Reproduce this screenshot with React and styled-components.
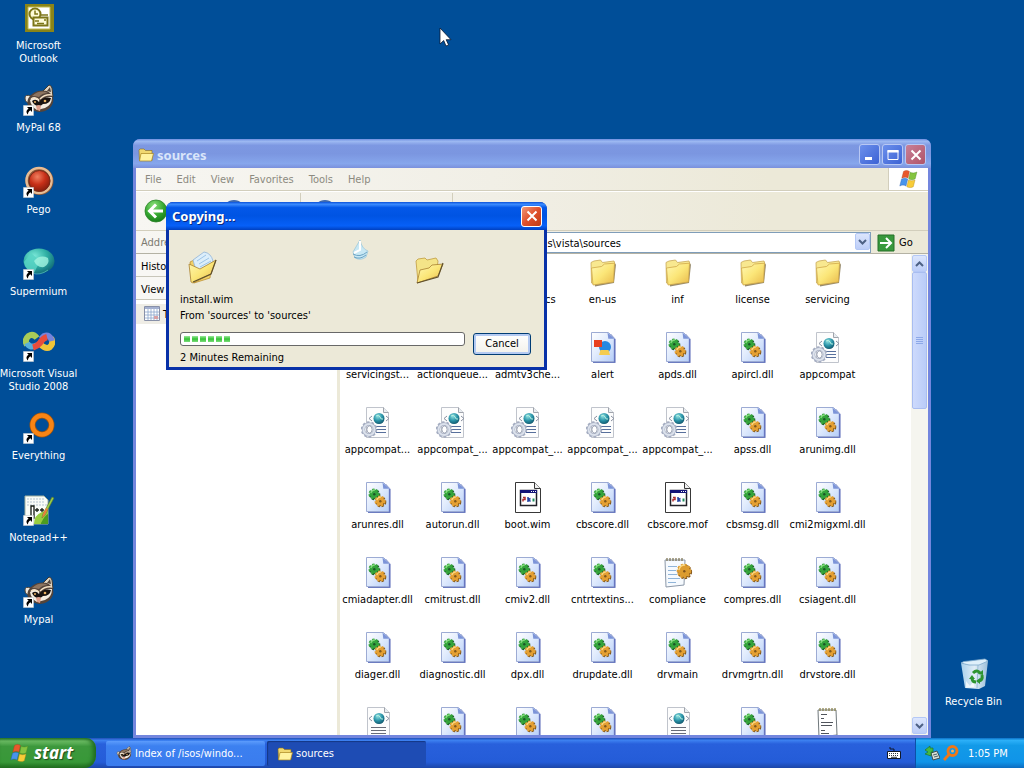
import React from 'react';
import styled, { createGlobalStyle, css } from 'styled-components';

const UI = "'DejaVu Sans Condensed', 'Liberation Sans', sans-serif";
const CAPTION = "'Noto Sans', 'Open Sans', sans-serif";

const GlobalStyle = createGlobalStyle`
  * { box-sizing: border-box; }
  body { margin: 0; background: #004e98; font: 11px/13px ${UI}; color: #000; }
  button, input { font: inherit; color: inherit; margin: 0; border: 0; padding: 0; background: none; }
  ul { list-style: none; margin: 0; padding: 0; }
  svg { display: block; flex: none; }
`;

/* ---------- drawings ---------- */

const HiddenSvg = styled.svg`
  position: absolute;
  width: 0;
  height: 0;
`;

const Defs = () => (
  <HiddenSvg aria-hidden="true">
    <defs>
      <linearGradient id="folderFront" x1="0" y1="0" x2="1" y2="1">
        <stop offset="0" stopColor="#fff8b4" /><stop offset="0.5" stopColor="#fbe678" /><stop offset="1" stopColor="#e8b84a" />
      </linearGradient>
      <linearGradient id="page" x1="0" y1="0" x2="1" y2="1">
        <stop offset="0" stopColor="#ffffff" /><stop offset="0.45" stopColor="#e2ecfd" /><stop offset="1" stopColor="#b4cdf8" />
      </linearGradient>
      <radialGradient id="globe" cx="0.4" cy="0.3" r="0.8">
        <stop offset="0" stopColor="#8fe0e0" /><stop offset="0.5" stopColor="#2a94a8" /><stop offset="1" stopColor="#0c4a60" />
      </radialGradient>
      <radialGradient id="pego" cx="0.4" cy="0.3" r="0.75">
        <stop offset="0" stopColor="#f08060" /><stop offset="0.5" stopColor="#c83018" /><stop offset="1" stopColor="#7e1c0c" />
      </radialGradient>
      <radialGradient id="teal" cx="0.35" cy="0.3" r="0.8">
        <stop offset="0" stopColor="#7ae8d8" /><stop offset="0.5" stopColor="#30b0a4" /><stop offset="1" stopColor="#0c6070" />
      </radialGradient>
      <radialGradient id="backBall" cx="0.4" cy="0.25" r="0.8">
        <stop offset="0" stopColor="#8ce07c" /><stop offset="0.55" stopColor="#36a832" /><stop offset="1" stopColor="#157a18" />
      </radialGradient>
      <linearGradient id="bin" x1="0" y1="0" x2="1" y2="0">
        <stop offset="0" stopColor="#b8dcf4" /><stop offset="0.5" stopColor="#f4fbff" /><stop offset="1" stopColor="#a8c8e0" />
      </linearGradient>
    </defs>
  </HiddenSvg>
);

const Flag = ({ size = 20 }) => (
  <svg width={size} height={size} viewBox="0 0 20 20">
    <path d="M4.500 2.500c2-1.400 4-1.300 5.900-.1L9 9C7 7.900 5.200 8 2.800 9.200z" fill="#e8582c" stroke="#b03c18" strokeWidth=".4" />
    <path d="M11.200 3.200c2 1.100 4.200 1 6.700-.2L16.200 9.800c-2 1.200-4.300 1.200-6.500.1z" fill="#84c440" stroke="#4c8824" strokeWidth=".4" />
    <path d="M2.500 10.200c2.300-1.200 4.200-1.200 6.200-.1L7 17c-2-1.200-4-1.200-6.200 0z" fill="#4894ec" stroke="#2058b0" strokeWidth=".4" />
    <path d="M9.500 10.900c2.200 1.100 4.300 1.100 6.500 0L14.300 17.700c-2.200 1.200-4.300 1.200-6.500.1z" fill="#f8cc38" stroke="#b08818" strokeWidth=".4" />
  </svg>
);

const FolderIcon = ({ size = 32 }) => (
  <svg width={size} height={size} viewBox="0 0 32 32">
    <path d="M6 8l20-1.500 3 2L27 27 8 30.500z" fill="#74643c" opacity=".75" />
    <path d="M4 6.500l3-1.500 6.500-1 2 2.500L27 5l1 3L8 28 4.500 27z" fill="#f8e890" stroke="#c8a858" strokeWidth=".8" />
    <path d="M4.500 12l10-1.500 3-2.500 10-.8L26.500 26 6 29z" fill="url(#folderFront)" stroke="#d0a848" strokeWidth=".8" />
  </svg>
);

const MiniFolder = () => (
  <svg width="16" height="16" viewBox="0 0 16 16">
    <path d="M1 3l1-1h4l1.500 1.500H14v10H1.500z" fill="#f0d870" stroke="#8a6c18" strokeWidth=".6" />
    <path d="M3 6.500h12.500L13.500 14H1.500z" fill="#fff3a0" stroke="#a88420" strokeWidth=".7" />
  </svg>
);

const Gear = ({ cx, cy, r, color, dark, light }) => (
  <g>
    <circle cx={cx + 0.8} cy={cy + 0.9} r={r} fill={dark} stroke={dark} strokeWidth="2.600" strokeDasharray="2.200 1.300" />
    <circle cx={cx} cy={cy} r={r} fill={color} stroke={color} strokeWidth="2.600" strokeDasharray="2.200 1.300" />
    <path d={`M${cx - r + 1} ${cy - 1}q1-${r - 1} ${r}-${r - 1}`} fill="none" stroke={light} strokeWidth="1.300" />
    <circle cx={cx + 0.3} cy={cy + 0.3} r="1.200" fill={dark} />
  </g>
);

const BluePage = () => (
  <g>
    <path d="M6 3h18l4.500 5v24H6z" fill="#6c7cc0" />
    <path d="M4.500 1.500h17l6 6v23h-23z" fill="url(#page)" stroke="#9cabd4" />
    <path d="M20.500 1.500l.8 6.200h6.200z" fill="#7c94d8" />
    <path d="M27.500 8v23" stroke="#6676c0" strokeWidth="1.300" />
  </g>
);

const DllIcon = () => (
  <svg width="32" height="32" viewBox="0 0 32 32">
    <BluePage />
    <Gear cx={12} cy={13} r={4.200} color="#34a43c" dark="#1c5428" light="#84dc7c" />
    <Gear cx={18} cy={20} r={4.200} color="#e4a034" dark="#80581c" light="#fcd880" />
  </svg>
);

const AlertIcon = () => (
  <svg width="32" height="32" viewBox="0 0 32 32">
    <BluePage />
    <circle cx="18" cy="16" r="6" fill="#2888e0" />
    <path d="M7 9h8v7H7z" fill="#e84020" />
    <path d="M12 24l1.500-5h8l1.500 5z" fill="#f4cc50" />
  </svg>
);

const WhitePage = () => (
  <path d="M5.500 1.500h17l5 5v25h-22z" fill="#fdfdfd" stroke="#c0c4cc" />
);

const XmlPart = ({ x = 17 }) => (
  <g>
    <circle cx={x} cy="12.500" r="5.500" fill="url(#globe)" />
    <path d={`M${x - 3} 10q3-2 4 1t3 2`} stroke="#b8f0e0" fill="none" />
    <path d={`M${x - 7} 10l-3 2.500 3 2.500M${x + 7} 10l3 2.500-3 2.500`} stroke="#8890a0" fill="none" />
  </g>
);

const ConfigIcon = () => (
  <svg width="34" height="32" viewBox="0 0 34 32">
    <WhitePage />
    <path d="M22.500 1.500v5h5" fill="#e8ecf0" stroke="#a0a4ac" />
    <XmlPart x={18} />
    <path d="M15 20.500h10M15 23.500h10M15 26.500h10" stroke="#58709c" />
    <circle cx="8" cy="23.500" r="7" fill="none" stroke="#a4acc0" strokeWidth="2.500" strokeDasharray="2.400 2" />
    <circle cx="8" cy="23.500" r="5.500" fill="none" stroke="#a8b0c4" strokeWidth="3.500" />
    <circle cx="8" cy="23.500" r="5.500" fill="none" stroke="#dce2ec" strokeWidth="2" />
    <ellipse cx="8.500" cy="23.500" rx="2.600" ry="3.600" fill="#fff" stroke="#8890a4" strokeWidth=".8" />
  </svg>
);

const XmlIcon = () => (
  <svg width="32" height="32" viewBox="0 0 32 32">
    <WhitePage />
    <path d="M22.500 1.500v5h5" fill="#e8ecf0" stroke="#a0a4ac" />
    <XmlPart x={17} />
    <path d="M9 21.500h15M9 24.500h15M9 27.500h15" stroke="#686c78" />
  </svg>
);

const WimIcon = () => (
  <svg width="32" height="32" viewBox="0 0 32 32">
    <path d="M3.500 1.500h19l6 6v24h-25z" fill="#fff" stroke="#383838" />
    <path d="M22.500 1.500v6h6" fill="#f0f0f0" stroke="#383838" />
    <path d="M8.500 9.500h16v15h-16z" fill="#fff" stroke="#202028" strokeWidth="1.500" />
    <path d="M8 9h17v3H8z" fill="#141478" />
    <path d="M19 10.500h1M21 10.500h1M23 10.500h1" stroke="#fff" />
    <path d="M11 16.500h2v2h-2v2" stroke="#b03030" fill="none" strokeWidth="1.500" />
    <path d="M16 16v5M18.500 17.500l-2 1 2 2" stroke="#2040a0" fill="none" strokeWidth="1.500" />
    <path d="M20.500 17.500h2v3h-2z" fill="#209060" />
  </svg>
);

const ComplianceIcon = () => (
  <svg width="32" height="32" viewBox="0 0 32 32">
    <path d="M3 4h20l-1 25-18 2z" fill="#f6fafe" stroke="#8c98a8" />
    <path d="M5 2v3M8 2v3M11 2v3M14 2v3M17 2v3M20 2v3" stroke="#807858" strokeWidth="1.300" />
    <path d="M6 10.500h9M6 14.500h8M6 18.500h9M6 22.500h12M6 26.500h8" stroke="#90b4d8" />
    <Gear cx={22} cy={15} r={6} color="#dc9c30" dark="#80541c" light="#fcd880" />
  </svg>
);

const TextIcon = () => (
  <svg width="32" height="32" viewBox="0 0 32 32">
    <path d="M6 4h18l1 25-18 2z" fill="#fff" stroke="#70787c" />
    <path d="M8 2v3M11 2v3M14 2v3M17 2v3M20 2v3M23 2v3" stroke="#8c8450" strokeWidth="1.300" />
    <path d="M9 8.500h6M9 12.500h3M9 16.500h12M9 19.500h11M9 24.500h4M9 27.500h8" stroke="#50545c" />
  </svg>
);

const Shortcut = () => (
  <g>
    <path d="M.5 21.500h10v10H.5z" fill="#fff" stroke="#c8ccd0" strokeWidth=".6" />
    <path d="M4 23h5v5l-1.700-1.700C5.500 27.500 5 28.700 5 30.500 2.500 28 3.500 26 5.600 24.700z" fill="#000" />
  </g>
);

const OutlookIcon = () => (
  <svg width="32" height="32" viewBox="0 0 32 32">
    <path d="M2 2h29v28H2z" fill="#8a8418" />
    <path d="M5 5h22v22H5z" fill="#fff" stroke="#c0ba50" />
    <circle cx="12" cy="12" r="5.500" fill="#fdfbd8" stroke="#7c7618" strokeWidth="2" />
    <path d="M12 8.500V12h3" stroke="#7c7618" fill="none" strokeWidth="1.500" />
    <path d="M10.500 15.500h14v8h-14z" fill="#fdfbd8" stroke="#7c7618" strokeWidth="2" />
    <path d="M17 13h8M12 19h4M14 21.500h7M21 18h2" stroke="#7c7618" strokeWidth="1.500" />
  </svg>
);

const RaccoonArt = () => (
  <g>
    <path d="M20 7q3-3 6-6 2 0 3 3l1 9z" fill="#e0d4c0" stroke="#403830" />
    <path d="M24 7l3-4 1 5z" fill="#54443a" />
    <path d="M8 12q-6-2-6 2 0 5 5 5z" fill="#f0e8dc" stroke="#504438" />
    <path d="M5 15C8 8 17 5 24 7c6 3 8 9 5 14-4 7-12 8-17 6-6-2-9-6-7-12z" fill="#54443a" />
    <path d="M9 12Q17 5 25 9q-6 0-9 4-3-1-7-1z" fill="#8c7460" />
    <path d="M7 16q5-5 9 0l1 4q3-8 12-7 0 8-7 11l-8 2q-6-3-7-10z" fill="#f4ece0" />
    <path d="M9 17q4-3 7 1 4-6 12-4-1 6-8 6-2 2-4 2-5 0-7-5z" fill="#181210" />
    <path d="M8 15q4-3 8 1M17 15q5-5 12-4" stroke="#f4e0c4" fill="none" strokeWidth="1.500" />
    <circle cx="12" cy="18" r="1" fill="#e8b060" /><circle cx="22" cy="17" r="1.300" fill="#e8b060" />
    <path d="M13 22q3-2 5 0l-1 5-3-1z" fill="#e0a08c" />
  </g>
);
const RaccoonIcon = () => (
  <svg width="32" height="32" viewBox="0 0 32 32"><RaccoonArt /><Shortcut /></svg>
);

const PegoIcon = () => (
  <svg width="32" height="32" viewBox="0 0 32 32">
    <circle cx="16.500" cy="15" r="14" fill="#8c5838" />
    <circle cx="16" cy="14.500" r="12.500" fill="none" stroke="#e8bc94" strokeWidth="2.500" />
    <circle cx="16.500" cy="15" r="10.500" fill="url(#pego)" stroke="#782818" />
    <Shortcut />
  </svg>
);

const SupermiumIcon = () => (
  <svg width="32" height="32" viewBox="0 0 32 32">
    <ellipse cx="16" cy="13" rx="15.500" ry="12.500" fill="url(#teal)" />
    <path d="M1 14L8 5l9 8-6 12Q2 22 1 14z" fill="#58d4c4" opacity=".85" />
    <path d="M11 13q6-7 14-3 2 6-4 9-7 1-10-6z" fill="#a4f4e0" opacity=".8" />
    <path d="M9 25q8 3 16-3" stroke="#58c8c0" fill="none" opacity=".7" />
    <Shortcut />
  </svg>
);

const VisualStudioIcon = () => (
  <svg width="32" height="32" viewBox="0 0 32 32" fill="none" strokeWidth="6">
    <path d="M14 8Q10 3 5.500 6 1 10 4 15" stroke="#a8cc58" />
    <path d="M4 13q3 6 10 2" stroke="#58b0dc" />
    <path d="M17 14q6 6 10 3 4-4 1-9" stroke="#f0c438" />
    <path d="M29 11q-2-7-8-5l-3 3" stroke="#7484dc" />
    <path d="M10 17.500q4-1 7-4.500 3-5 7-6" stroke="#e84c3c" />
    <Shortcut />
  </svg>
);

const EverythingIcon = () => (
  <svg width="32" height="32" viewBox="0 0 32 32">
    <circle cx="19" cy="13" r="9.500" fill="none" stroke="#9c5410" strokeWidth="6" />
    <circle cx="19" cy="13" r="9.500" fill="none" stroke="#f88414" strokeWidth="4.500" />
    <Shortcut />
  </svg>
);

const NotepadIcon = () => (
  <svg width="32" height="32" viewBox="0 0 32 32">
    <path d="M2 2h19l4 4v24H2z" fill="#f8fcf8" stroke="#a0b0a0" />
    <path d="M4 5h17M4 8h17M4 11h20" stroke="#b4c4d0" strokeDasharray="2 1" />
    <path d="M11 30q0-9 8-12l6-3v15z" fill="#98cc40" />
    <path d="M18 29q4-8 7-9v10h-7z" fill="#4c9c20" />
    <path d="M8 12v12h3V12z" fill="#fff" stroke="#101810" strokeWidth="1.300" />
    <path d="M12 16h4M14 14v4M17 16h4M19 14v4" stroke="#182018" strokeWidth="1.300" />
    <path d="M20 20L29 3l2 1-9 17-3 3z" fill="#98d048" stroke="#58702c" strokeWidth=".6" />
    <path d="M20 20l3-6 2 1-3 6-3 3z" fill="#e8803c" />
    <Shortcut />
  </svg>
);

const RecycleIcon = () => (
  <svg width="32" height="32" viewBox="0 0 32 32">
    <path d="M3 5q10 3 16 0l8-4 3 2-3 25-6 3-14-1z" fill="url(#bin)" opacity=".92" />
    <path d="M3 5q2-2 8-2l16-2 3 2-9 4Q10 8 3 5z" fill="#dff0fb" stroke="#7ca8cc" strokeWidth=".8" />
    <path d="M20 7l-1 23" stroke="#8cb4d0" strokeWidth=".8" />
    <path d="M8 23l4 5 4-5v6l-8 1z" fill="#fff" opacity=".7" />
    <g fill="none" stroke="#2c9430" strokeWidth="3">
      <path d="M15 15q4-4 7 0" /><path d="M24 17q1 5-3 6" /><path d="M18 24q-4 0-4-4" />
    </g>
    <path d="M20 16l5 1V12zM22 20v6l-4-3zM11 21l3-4 3 4z" fill="#2c9430" />
  </svg>
);

const CalendarIcon = () => (
  <svg width="16" height="16" viewBox="0 0 16 16">
    <path d="M.5 .5h15v14H.5z" fill="#fff" stroke="#8890a8" />
    <path d="M1 1h14v2H1z" fill="#a4b0d0" />
    <path d="M1 6h14M1 9h14M1 12h14M4 3v11M7 3v11M10 3v11M13 3v11" stroke="#8ca4cc" strokeWidth=".8" />
    <path d="M10 10h4v3h-4z" fill="#d8a0a4" />
  </svg>
);

const BackIcon = () => (
  <svg width="24" height="24" viewBox="0 0 24 24">
    <circle cx="12" cy="12" r="11" fill="url(#backBall)" stroke="#2c8428" strokeWidth=".8" />
    <path d="M12 5.500L5.500 12l6.500 6.500M6 12h13" fill="none" stroke="#fff" strokeWidth="3" />
  </svg>
);

const RoundToolIcon = () => (
  <svg width="24" height="24" viewBox="0 0 24 24">
    <circle cx="12" cy="12" r="10" fill="#c4dcf4" stroke="#3c68b0" strokeWidth="2" />
  </svg>
);

const Pointer = styled.svg`
  position: absolute;
  left: 439px;
  top: 27px;
  z-index: 3;
`;

const CopyScene = () => (
  <svg width="100%" height="56" viewBox="0 0 351 56" preserveAspectRatio="xMinYMin meet" aria-hidden="true">
    <g transform="translate(7 14)">
      <path d="M3 12l6-3 16 3-2 16-16 5z" fill="#f0d068" stroke="#b88828" strokeWidth=".7" />
      <path d="M6 10L17 2q7 1 9 9l-4 14-12-1z" fill="#dceefa" stroke="#90b4d8" strokeWidth=".8" />
      <path d="M10 11l9-6M12 14l10-6M13 17l11-6" stroke="#9cc4e8" />
      <path d="M2 14l11 5 16-9-5 14-18 9-2-1z" fill="url(#folderFront)" stroke="#a88030" strokeWidth=".8" />
      <path d="M29 10l-5 14-18 8" fill="none" stroke="#60502c" strokeWidth="1.200" />
    </g>
    <g>
      <path d="M180 4l-7 12 2 6q6 3 11-1l2-6q-6-2-8-11z" fill="#c8e8f4" stroke="#98c4d8" strokeWidth=".7" />
      <path d="M180 5v9l-6 3" stroke="#fff" fill="none" strokeWidth="2" />
      <path d="M173 18q7 4 14-2M174 21q6 3 12-2" stroke="#6ca4c4" fill="none" />
    </g>
    <g transform="translate(234 18)">
      <path d="M2 7l2-2 7-1 2 2 9-2 2 3-2 16-18 5z" fill="#f4e488" stroke="#c09c40" strokeWidth=".8" />
      <path d="M3 29l3-13 9-2 3-3 11-1-5 12z" fill="url(#folderFront)" stroke="#a88030" strokeWidth=".8" />
      <path d="M29 9l-5 14-21 6" fill="none" stroke="#60502c" strokeWidth="1.200" />
    </g>
  </svg>
);

const CloseGlyph = () => (
  <svg width="12" height="12" viewBox="0 0 12 12"><path d="M1.500 1.500l9 9M10.500 1.500l-9 9" stroke="#fff" strokeWidth="2" /></svg>
);
const MinGlyph = () => (
  <svg width="12" height="12" viewBox="0 0 12 12"><path d="M1 8h7v3H1z" fill="#fff" /></svg>
);
const MaxGlyph = () => (
  <svg width="12" height="12" viewBox="0 0 12 12"><path d="M1 1.500h10v9H1z" fill="none" stroke="#fff" /><path d="M.5 1h11v2.500H.5z" fill="#fff" /></svg>
);
const Chevron = ({ up }) => (
  <svg width="9" height="6" viewBox="0 0 9 6">
    <path d={up ? 'M1 5l3.500-3.500L8 5' : 'M1 1l3.500 3.500L8 1'} fill="none" stroke="#4d6185" strokeWidth="2" />
  </svg>
);

/* ---------- desktop ---------- */

const Screen = styled.div`
  display: flex;
  flex-direction: column;
  height: 100vh;
  overflow: hidden;
`;

const Desktop = styled.main`
  position: relative;
  flex: 1;
  min-height: 0;
  display: flex;
  justify-content: space-between;
  padding-top: 2px;
`;

const IconColumn = styled.div`
  display: flex;
  flex-direction: column;
  padding-bottom: ${p => (p.$end ? '29px' : '0')};
  padding-right: ${p => (p.$end ? '12px' : '0')};
  justify-content: ${p => (p.$end ? 'flex-end' : 'flex-start')};
`;

const DesktopIcon = styled.button`
  display: flex;
  flex-direction: column;
  align-items: center;
  gap: 5px;
  width: 77px;
  height: ${p => (p.$last ? '51px' : '82px')};
  color: #fff;
  white-space: pre;
  text-align: center;
`;

/* ---------- windows ---------- */

const Explorer = styled.section`
  position: absolute;
  left: 133px;
  right: 93px;
  top: 139px;
  bottom: 0;
  display: flex;
  flex-direction: column;
  padding: 0 3px 3px;
  border-radius: 7px 7px 0 0;
  background: #7386de;
  overflow: hidden;
`;

const TitleBar = styled.header`
  display: flex;
  align-items: center;
  flex: none;
  margin: 0 -3px;
  ${p => p.$active ? css`
    height: 28px;
    padding: 0 5px 0 6px;
    background: linear-gradient(#0a50d8, #3c8cff 8%, #0458e8 20%, #0054e3 50%, #0660f8 85%, #0040c0);
    color: #fff;
    text-shadow: 1px 1px #0a2a80;
  ` : css`
    gap: 3px;
    height: 29px;
    padding: 2px 5px 0 5px;
    background: linear-gradient(#6f8fe0, #9db9f2 8%, #7d98e2 22%, #7b96e0 50%, #86a6ec 85%, #7a90dc);
    color: #d9e5fa;
  `}
`;

const Caption = styled.h1`
  flex: 1;
  margin: 0;
  font: bold 13px/18px ${CAPTION};
`;

const CaptionButton = styled.button`
  display: grid;
  place-items: center;
  width: 21px;
  height: 21px;
  border: 1px solid ${p => (p.$dim ? '#b8c8f4' : '#fff')};
  border-radius: 3px;
  background: ${p => p.$close
    ? (p.$dim ? 'linear-gradient(135deg, #c88098, #b05468)' : 'linear-gradient(135deg, #f09878, #e0502c 50%, #c03c14)')
    : 'linear-gradient(135deg, #6c90ec, #3c62d4)'};
`;

const CaptionButtons = styled.div`
  display: flex;
  gap: 2px;
`;

const barTint = 'linear-gradient(90deg, #f7f6f2, #f1efe6 45%, #ece9d8 80%)';

const MenuBar = styled.nav`
  display: flex;
  flex: none;
  height: 23px;
  padding-left: 2px;
  border-bottom: 1px solid #d2cebc;
  background: ${barTint};
  color: #8c8a80;
`;

const MenuItem = styled.button`
  padding: 0 8px 0 7px;
`;

const FlagBox = styled.div`
  display: grid;
  place-items: center;
  width: 40px;
  margin-left: auto;
  border-left: 1px solid #d2cebc;
  background: #fff;
`;

const ToolBar = styled.div`
  display: flex;
  align-items: center;
  gap: 54px;
  flex: none;
  height: 40px;
  padding-left: 8px;
  border-top: 1px solid #fff;
  border-bottom: 1px solid #d2cebc;
  background: ${barTint};
`;

const ToolGroup = styled.div`
  display: flex;
  align-items: center;
  gap: 12px;
  min-width: 98px;
`;

const ToolDivider = styled.i`
  width: 1px;
  height: 36px;
  background: #d2cebc;
`;

const AddressBar = styled.div`
  display: flex;
  align-items: center;
  flex: none;
  height: 23px;
  padding: 1px 0 0 5px;
  background: ${barTint};
  border-bottom: 1px solid #b4b2a4;
  label { color: #7c7a70; }
`;

const AddressBox = styled.div`
  display: flex;
  flex: 1;
  align-self: stretch;
  margin-left: 5px;
  border: 1px solid #7f9db9;
  background: #fff;
`;

const AddressInput = styled.input`
  flex: 1;
  min-width: 0;
  padding: 2px 0 0 361px;
  outline: 0;
`;

const ScrollButton = styled.button`
  display: grid;
  place-items: center;
  flex: none;
  width: 15px;
  height: 17px;
  border: 1px solid #b4c8f6;
  border-radius: 2px;
  background: linear-gradient(#dce6fd, #bccdf8);
`;

const GoButton = styled.button`
  display: flex;
  align-items: center;
  gap: 4px;
  width: 57px;
  padding-left: 6px;
`;

const Body = styled.div`
  display: flex;
  flex: 1;
  min-height: 0;
  background: #fff;
`;

const SideBar = styled.aside`
  flex: none;
  width: 204px;
  border-right: 3px solid #ece9d8;
`;

const SideHead = styled.div`
  height: 23px;
  padding: 6px 5px 0;
  border-bottom: 1px solid #c8c6ba;
  background: #f8f7f4;
`;

const SideRow = styled.div`
  display: flex;
  align-items: center;
  gap: 3px;
  height: 20px;
  margin-top: 4px;
  padding-left: 8px;
  background: #efede6;
`;

const Files = styled.ul`
  flex: 1;
  min-width: 0;
  display: grid;
  grid-template-columns: repeat(auto-fill, 75px);
  grid-auto-rows: 75px;
  padding-top: 2px;
  overflow: hidden;
`;

const FileItem = styled.li`
  display: flex;
  flex-direction: column;
  align-items: center;
  gap: 5px;
  white-space: nowrap;
`;

const ScrollTrack = styled.div`
  display: flex;
  flex-direction: column;
  flex: none;
  align-items: center;
  width: 17px;
  padding: 1px 0;
  background: #f5f5ef;
`;

const ScrollThumb = styled.div`
  display: grid;
  place-items: center;
  width: 15px;
  height: 137px;
  margin-bottom: auto;
  border: 1px solid #a8bdf0;
  border-radius: 2px;
  background: linear-gradient(90deg, #cddafc, #b9ccf8);
  color: #8ca8e8;
`;

const Dialog = styled.section`
  position: absolute;
  left: 166px;
  top: 202px;
  z-index: 2;
  width: 381px;
  padding: 0 3px 3px;
  border-radius: 7px 7px 0 0;
  background: #0831a8;
  overflow: hidden;
`;

const DialogBody = styled.div`
  padding: 6px 13px 1px 11px;
  background: #ece9d8;
  line-height: 16px;
`;

const Line = styled.p`
  margin: 0;
`;

const CopyRow = styled.div`
  display: flex;
  align-items: flex-start;
  gap: 8px;
  padding-top: 8px;
`;

const CopyStatus = styled.div`
  flex: 1;
`;

const Progress = styled.div`
  display: flex;
  gap: 2px;
  height: 14px;
  margin-bottom: 4px;
  padding: 3px;
  border: 1px solid #686868;
  border-radius: 3px;
  background: #fff;
`;

const Chunk = styled.i`
  width: 6px;
  background: linear-gradient(#9ce89c, #34c234 50%, #7cdc7c);
`;

const CancelButton = styled.button`
  width: 58px;
  height: 22px;
  margin-top: 1px;
  border: 1px solid #003c74;
  border-radius: 3px;
  background: linear-gradient(#fff, #f2f1ea);
  box-shadow: inset 0 0 0 2px #b4caf2;
`;

/* ---------- task bar ---------- */

const TaskBar = styled.footer`
  display: flex;
  align-items: center;
  flex: none;
  height: 30px;
  background: linear-gradient(#2050b8, #3c80f0 8%, #2860dc 20%, #245cd8 80%, #1c46a8);
  color: #fff;
`;

const StartButton = styled.button`
  display: flex;
  align-items: center;
  gap: 4px;
  width: 96px;
  height: 30px;
  padding-left: 10px;
  border-radius: 0 10px 12px 0;
  background: linear-gradient(#2c7c2c, #6cbc64 10%, #3c983c 28%, #389838 80%, #22701f);
  box-shadow: inset -3px 0 4px #1f6a20;
  font: italic bold 17px/20px ${CAPTION};
  text-shadow: 1px 1px 1px #1c4a1c;
`;

const Tasks = styled.div`
  display: flex;
  flex: 1;
  gap: 2px;
  padding: 2px 0 1px 10px;
`;

const TaskButton = styled.button`
  display: flex;
  align-items: center;
  gap: 3px;
  width: 159px;
  height: 25px;
  padding-left: 10px;
  border-radius: 2px;
  background: ${p => (p.$pressed ? '#1e4cb4' : 'linear-gradient(#5c9cfc, #3c80f0 20%, #3a7cee)')};
  box-shadow: ${p => (p.$pressed ? 'inset 1px 1px 1px #143884' : 'none')};
  white-space: nowrap;
`;

const Tray = styled.div`
  display: flex;
  align-items: center;
  align-self: stretch;
  gap: 3px;
  width: 109px;
  margin-left: 14px;
  padding-left: 8px;
  border-left: 1px solid #0c50a8;
  background: linear-gradient(#0c70c8, #2cb0f8 8%, #129ae8 25%, #1094e8 80%, #0c6cc0);
`;

const Clock = styled.time`
  margin-left: 6px;
`;

/* ---------- data ---------- */

const shortcuts = [
  ['Microsoft\nOutlook', OutlookIcon],
  ['MyPal 68', RaccoonIcon],
  ['Pego', PegoIcon],
  ['Supermium', SupermiumIcon],
  ['Microsoft Visual\nStudio 2008', VisualStudioIcon],
  ['Everything', EverythingIcon],
  ['Notepad++', NotepadIcon],
  ['Mypal', RaccoonIcon],
];

const files = [
  ['', FolderIcon], ['', FolderIcon], ['diagnostics', FolderIcon], ['en-us', FolderIcon], ['inf', FolderIcon], ['license', FolderIcon], ['servicing', FolderIcon],
  ['servicingst...', FolderIcon], ['actionqueue...', DllIcon], ['admtv3che...', DllIcon], ['alert', AlertIcon], ['apds.dll', DllIcon], ['apircl.dll', DllIcon], ['appcompat', ConfigIcon],
  ['appcompat...', ConfigIcon], ['appcompat_...', ConfigIcon], ['appcompat_...', ConfigIcon], ['appcompat_...', ConfigIcon], ['appcompat_...', ConfigIcon], ['apss.dll', DllIcon], ['arunimg.dll', DllIcon],
  ['arunres.dll', DllIcon], ['autorun.dll', DllIcon], ['boot.wim', WimIcon], ['cbscore.dll', DllIcon], ['cbscore.mof', WimIcon], ['cbsmsg.dll', DllIcon], ['cmi2migxml.dll', DllIcon],
  ['cmiadapter.dll', DllIcon], ['cmitrust.dll', DllIcon], ['cmiv2.dll', DllIcon], ['cntrtextins...', DllIcon], ['compliance', ComplianceIcon], ['compres.dll', DllIcon], ['csiagent.dll', DllIcon],
  ['diager.dll', DllIcon], ['diagnostic.dll', DllIcon], ['dpx.dll', DllIcon], ['drupdate.dll', DllIcon], ['drvmain', DllIcon], ['drvmgrtn.dll', DllIcon], ['drvstore.dll', DllIcon],
  ['', XmlIcon], ['', DllIcon], ['', DllIcon], ['', DllIcon], ['', XmlIcon], ['', DllIcon], ['', TextIcon],
];

export default function App() {
  return (
    <Screen>
      <GlobalStyle />
      <Defs />
      <Desktop>
        <IconColumn>
          {shortcuts.map(([name, Icon]) => (
            <DesktopIcon key={name}><Icon />{name}</DesktopIcon>
          ))}
        </IconColumn>
        <IconColumn $end>
          <DesktopIcon $last><RecycleIcon />Recycle Bin</DesktopIcon>
        </IconColumn>

        <Explorer>
          <TitleBar>
            <MiniFolder />
            <Caption>sources</Caption>
            <CaptionButtons>
              <CaptionButton $dim aria-label="Minimize"><MinGlyph /></CaptionButton>
              <CaptionButton $dim aria-label="Maximize"><MaxGlyph /></CaptionButton>
              <CaptionButton $dim $close aria-label="Close"><CloseGlyph /></CaptionButton>
            </CaptionButtons>
          </TitleBar>
          <MenuBar>
            {['File', 'Edit', 'View', 'Favorites', 'Tools', 'Help'].map(m => <MenuItem key={m}>{m}</MenuItem>)}
            <FlagBox><Flag size={20} /></FlagBox>
          </MenuBar>
          <ToolBar>
            <BackIcon />
            <RoundToolIcon />
            <ToolGroup>
              <ToolDivider />
              <RoundToolIcon />
            </ToolGroup>
            <ToolDivider />
          </ToolBar>
          <AddressBar>
            <label htmlFor="address">Address</label>
            <AddressBox>
              <AddressInput id="address" defaultValue="s\vista\sources" />
              <ScrollButton aria-label="Show addresses"><Chevron /></ScrollButton>
            </AddressBox>
            <GoButton>
              <svg width="18" height="18" viewBox="0 0 18 18">
                <path d="M1 1h16v16H1z" fill="#38983c" stroke="#247028" />
                <path d="M3 9h10M9 4l5 5-5 5" fill="none" stroke="#fff" strokeWidth="2" />
              </svg>
              Go
            </GoButton>
          </AddressBar>
          <Body>
            <SideBar>
              <SideHead>History</SideHead>
              <SideHead>View</SideHead>
              <SideRow><CalendarIcon />Today</SideRow>
            </SideBar>
            <Files>
              {files.map(([name, Icon], i) => <FileItem key={i}><Icon />{name}</FileItem>)}
            </Files>
            <ScrollTrack>
              <ScrollButton aria-label="Scroll up"><Chevron up /></ScrollButton>
              <ScrollThumb>
                <svg width="7" height="8" viewBox="0 0 7 8"><path d="M0 .5h7M0 2.500h7M0 4.500h7M0 6.500h7" stroke="currentColor" /></svg>
              </ScrollThumb>
              <ScrollButton aria-label="Scroll down"><Chevron /></ScrollButton>
            </ScrollTrack>
          </Body>
        </Explorer>

        <Dialog role="dialog" aria-label="Copying">
          <TitleBar $active>
            <Caption>Copying...</Caption>
            <CaptionButton $close aria-label="Close"><CloseGlyph /></CaptionButton>
          </TitleBar>
          <DialogBody>
            <CopyScene />
            <Line>install.wim</Line>
            <Line>From 'sources' to 'sources'</Line>
            <CopyRow>
              <CopyStatus>
                <Progress role="progressbar" aria-label="Copy progress">
                  {[0, 1, 2, 3, 4, 5].map(n => <Chunk key={n} />)}
                </Progress>
                <Line>2 Minutes Remaining</Line>
              </CopyStatus>
              <CancelButton>Cancel</CancelButton>
            </CopyRow>
          </DialogBody>
        </Dialog>

        <Pointer width="13" height="21" viewBox="0 0 13 21">
          <path d="M1 1v16l3.700-3.500L7 19l2.600-1.100-2.400-5.200H12z" fill="#fff" stroke="#0a1830" strokeWidth=".8" />
        </Pointer>
      </Desktop>

      <TaskBar>
        <StartButton><Flag size={20} />start</StartButton>
        <Tasks>
          <TaskButton>
            <svg width="16" height="16" viewBox="0 0 32 32"><RaccoonArt /></svg>
            Index of /isos/windo...
          </TaskButton>
          <TaskButton $pressed><MiniFolder />sources</TaskButton>
        </Tasks>
        <svg width="14" height="12" viewBox="0 0 14 12">
          <path d="M3 0v2h4v2" stroke="#101828" fill="none" />
          <path d="M.5 4.500h13v7H.5z" fill="#fff" stroke="#101828" />
          <path d="M2 6.500h10M2 8.500h10" stroke="#303840" strokeDasharray="1 1" /><path d="M4 10.300h6" stroke="#303840" />
        </svg>
        <Tray>
          <svg width="16" height="16" viewBox="0 0 16 16">
            <path d="M7 8l6-2 3 7-7 2z" fill="#d8e0d8" stroke="#404c50" />
            <path d="M9 10l4-1M10 12l4-1" stroke="#506068" />
            <path d="M1 5l5-4v2h3v4H7v4L1 9l3-2z" fill="#44b844" stroke="#1c6c24" strokeWidth=".6" />
          </svg>
          <svg width="16" height="16" viewBox="0 0 16 16">
            <circle cx="9.500" cy="6" r="4.500" fill="none" stroke="#f07818" strokeWidth="2.800" />
            <path d="M6 9.500L1 15" stroke="#f07818" strokeWidth="2.800" />
            <circle cx="9.500" cy="6" r="1.500" fill="#f8b060" />
          </svg>
          <Clock>1:05 PM</Clock>
        </Tray>
      </TaskBar>
    </Screen>
  );
}
